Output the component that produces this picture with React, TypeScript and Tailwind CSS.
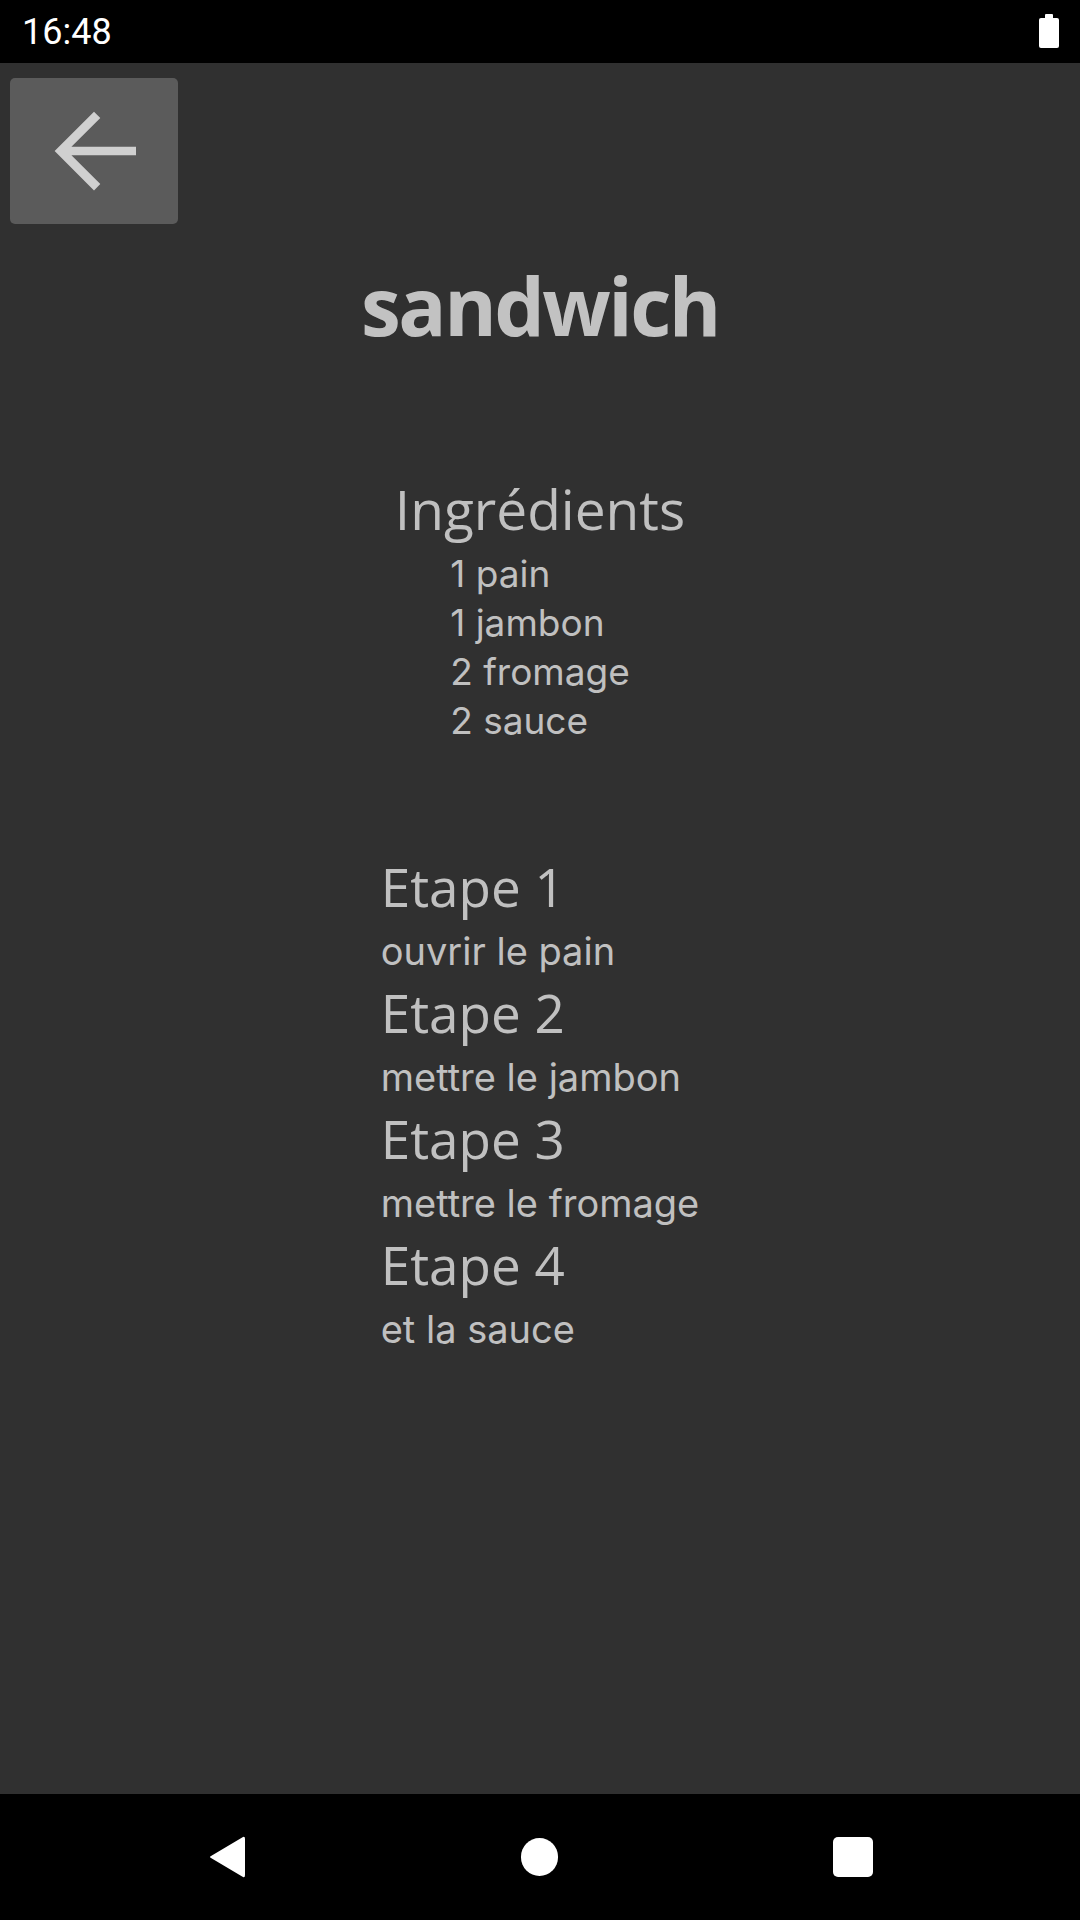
import React from "react";

const ingredients = ["1 pain", "1 jambon", "2 fromage", "2 sauce"];

const steps = [
  { title: "Etape 1", text: "ouvrir le pain" },
  { title: "Etape 2", text: "mettre le jambon" },
  { title: "Etape 3", text: "mettre le fromage" },
  { title: "Etape 4", text: "et la sauce" },
];

const StatusBar = () => (
  <div className="h-[63px] bg-black flex items-center justify-between pl-[22px] pr-[21px] shrink-0">
    <span className="text-white text-[36px] leading-none font-['Roboto',sans-serif] mt-[1px]">
      16:48
    </span>
    <svg width="20" height="34" viewBox="0 0 20 34" className="mt-[-2px]">
      <rect x="6" y="0" width="8" height="5" rx="1" fill="#fff" />
      <rect x="0" y="4" width="20" height="30" rx="2" fill="#fff" />
    </svg>
  </div>
);

const NavBar = () => (
  <div className="h-[126px] bg-black flex items-center justify-center gap-[275px] shrink-0">
    <svg width="38" height="42" viewBox="0 0 38 42">
      <path d="M35 1 Q37 0 37 3 L37 39 Q37 42 35 41 L3 22 Q1 21 3 20 Z" fill="#fff" />
    </svg>
    <div className="w-[37px] h-[38px] rounded-full bg-white" />
    <div className="w-[40px] h-[40px] rounded-[5px] bg-white" />
  </div>
);

export default function App() {
  return (
    <div className="w-[1080px] h-[1920px] flex flex-col bg-[#303030] overflow-hidden">
      <StatusBar />
      <main className="flex-1 flex flex-col">
        <div className="pl-[10px] pt-[15px]">
          <button className="w-[168px] h-[146px] rounded-[5px] bg-[#5b5b5b] flex items-center justify-center">
            <svg width="126" height="126" viewBox="0 0 24 24">
              <path
                d="M20 11.2H7.7l5.5-5.5L12 4.5 4.5 12l7.5 7.5 1.2-1.2-5.5-5.5H20z"
                fill="#d0d0d0"
              />
            </svg>
          </button>
        </div>

        <h1 className="mt-[31px] text-center text-[80px] leading-[100px] font-bold tracking-[-2.5px] text-[#c2c2c2] font-['Open_Sans',sans-serif]">
          sandwich
        </h1>

        <h2 className="mt-[124px] text-center text-[55px] leading-[60px] text-[#c0c0c0] font-['Open_Sans',sans-serif]">
          Ingrédients
        </h2>

        <div className="mt-[10px] flex justify-center">
          <ul className="flex flex-col text-[37px] leading-[49px] text-[#c0c0c0] font-['Inter',sans-serif]">
            {ingredients.map((item) => (
              <li key={item}>{item}</li>
            ))}
          </ul>
        </div>

        <div className="mt-[110px] flex justify-center">
          <div className="flex flex-col">
            {steps.map((step) => (
              <div key={step.title} className="flex flex-col">
                <h3 className="text-[53px] leading-[64px] text-[#c0c0c0] font-['Open_Sans',sans-serif]">
                  {step.title}
                </h3>
                <p className="pt-[3px] text-[38px] leading-[59px] text-[#c0c0c0] font-['Inter',sans-serif]">
                  {step.text}
                </p>
              </div>
            ))}
          </div>
        </div>
      </main>
      <NavBar />
    </div>
  );
}
